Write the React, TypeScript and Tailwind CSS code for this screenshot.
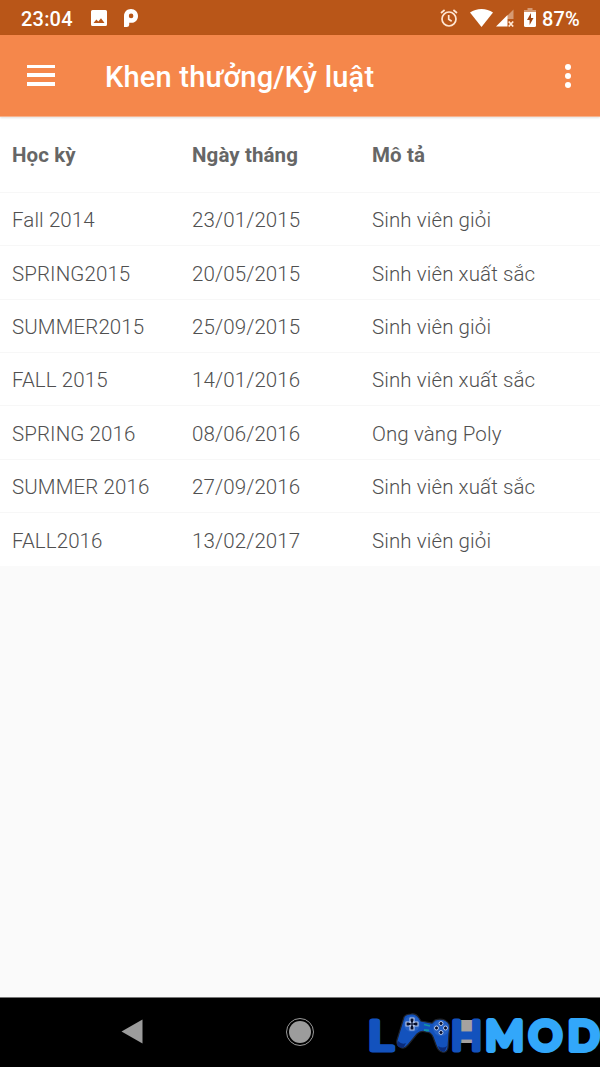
const records = [
  { term: 'Fall 2014', date: '23/01/2015', note: 'Sinh viên giỏi' },
  { term: 'SPRING2015', date: '20/05/2015', note: 'Sinh viên xuất sắc' },
  { term: 'SUMMER2015', date: '25/09/2015', note: 'Sinh viên giỏi' },
  { term: 'FALL 2015', date: '14/01/2016', note: 'Sinh viên xuất sắc' },
  { term: 'SPRING 2016', date: '08/06/2016', note: 'Ong vàng Poly' },
  { term: 'SUMMER 2016', date: '27/09/2016', note: 'Sinh viên xuất sắc' },
  { term: 'FALL2016', date: '13/02/2017', note: 'Sinh viên giỏi' },
];

function StatusBar() {
  return (
    <div className="flex h-[35px] items-center bg-[#b95618] pl-[21px] pr-[20px] pt-[2px] text-[20px] font-medium text-white">
      <span className="w-[70px] tracking-[0.2px]">23:04</span>
      {/* picture */}
      <svg className="-mt-[1px] h-[16px] w-[16px]" viewBox="0 0 16 16">
        <path
          fill="#fff"
          fillRule="evenodd"
          d="M1.500 0h13A1.500 1.500 0 0 1 16 1.500v13a1.500 1.500 0 0 1-1.500 1.500h-13A1.500 1.500 0 0 1 0 14.500v-13A1.500 1.500 0 0 1 1.500 0zM2.500 13h11L10 8.200l-2.700 3.400-1.900-2.200z"
        />
      </svg>
      <svg className="-mt-[1px] ml-[17px] h-[18px] w-[14px]" viewBox="0 0 14 18">
        <path
          fill="#fff"
          fillRule="evenodd"
          d="M0 7C0 2.800 3 0 7 0s7 2.900 7 6.900-2.900 6.900-6.800 6.900H5.200V16Q5 18 2.800 18H0zM4.800 6.900a2.300 2.300 0 1 0 4.600 0 2.300 2.300 0 1 0-4.600 0z"
        />
      </svg>
      <div className="ml-auto flex items-center">
        {/* alarm */}
        <svg className="mr-[12px] -mt-[2px] h-[18px] w-[18px]" viewBox="0 0 18 18" fill="none" stroke="#ffe6d2" strokeWidth="1.700">
          <circle cx="9" cy="10" r="7" />
          <path d="M8.700 6v4.300l3 1.900M1 4l3.600-3M17 4l-3.600-3" />
        </svg>
        <svg className="mr-[3px] -mt-[2px] h-[18px] w-[23px]" viewBox="0 0 23 18">
          <path fill="#fff" d="M0 3.600Q5 0 11.500 0T23 3.600L11.500 18z" />
        </svg>
        <svg className="mr-[10px] -mt-[2px] h-[18px] w-[18px]" viewBox="0 0 18 18">
          <path fill="#d69a73" d="M11 7l6.500-6.500V10H11z" />
          <path fill="#fff" d="M0 17.500L11.500 6v11.500z" />
          <path stroke="#ffe6d2" strokeWidth="1.700" d="M12.700 12.500l4.500 5M17.200 12.500l-4.500 5" />
        </svg>
        {/* battery */}
        <svg className="mr-[6px] -mt-[2px] h-[19px] w-[12px]" viewBox="0 0 12 19">
          <path fill="#d69a73" d="M3.500 0h5v2H12v3H0V2h3.500z" />
          <path fill="#fff" d="M0 4h12v13.500q0 1.500-1.500 1.500h-9Q0 19 0 17.500z" />
          <path fill="#a04412" d="M7 5L3 12h2.600v5L9.500 10H7z" />
        </svg>
        <span className="tracking-[0.2px]">87%</span>
      </div>
    </div>
  );
}

function Toolbar() {
  return (
    <header className="relative flex h-[82px] items-center border-b border-[#f7b28c] bg-[#f5874b] pl-[27px] pr-[29px] text-white shadow-[0_1px_2px_rgba(0,0,0,0.12)]">
      <button className="flex w-[28px] flex-col gap-[5px]">
        <span className="h-[3px] w-full bg-white" />
        <span className="h-[4px] w-full bg-white" />
        <span className="h-[4px] w-full bg-white" />
      </button>
      <h1 className="ml-[50px] mt-[5px] text-[29px] font-medium tracking-[0.2px]">Khen thưởng/Kỷ luật</h1>
      <button className="ml-auto flex flex-col gap-[3px]">
        <span className="size-[6px] rounded-full bg-white" />
        <span className="size-[6px] rounded-full bg-white" />
        <span className="size-[6px] rounded-full bg-white" />
      </button>
    </header>
  );
}

function Gamepad() {
  return (
    <svg className="absolute left-[27px] top-[-5px] h-[41px] w-[55px]" viewBox="0 0 55 41">
      <path
        fill="#1352bd"
        stroke="#20242c"
        strokeWidth="1.200"
        d="M8 5Q10 2 15 2Q20 1 23 6L25 9L36 11L39 8Q48 5 53 12Q54 15 53 22L52 36Q51 41 46 40Q42 39 40 33L37 25Q35 20 30 20Q25 18 21 22L12 33Q8 38 4 35Q0 33 1 28Z"
      />
      <path fill="#0b2c7c" d="M2 29q4 4 8 2l-2 4q-5 2-7-2zM42 34q5 3 9 0l-2 5q-5 2-7-5z" />
      <circle cx="16" cy="12" r="8" fill="#2460c5" />
      <circle cx="45" cy="16" r="8" fill="#2460c5" />
      <path
        fill="#040d2c"
        stroke="#b7c9ed"
        strokeWidth="1.100"
        strokeLinejoin="round"
        d="M14 6h4v3l-1 2 2-1h3v4h-3l-2-1 1 2v3h-4v-3l1-2-2 1h-3v-4h3l2 1-1-2z"
      />
      <g fill="#040d2c" stroke="#b7c9ed" strokeWidth="1">
        <circle cx="45" cy="11.500" r="2" />
        <circle cx="45" cy="20.500" r="2" />
        <circle cx="40.500" cy="16" r="2" />
        <circle cx="49.500" cy="16" r="2" />
      </g>
      <path stroke="#1495a5" strokeWidth="1.800" d="M28 12.500l6 1.500M28 18l5 .5" />
    </svg>
  );
}

function Watermark() {
  return (
    <div className="absolute left-[369px] top-[19px] h-[40px] w-[231px]">
      <svg
        className="h-[40px] w-[231px] overflow-visible"
        viewBox="0 0 231 40"
        fontFamily="Lato, sans-serif"
        fontWeight="400"
        strokeLinejoin="round"
        strokeLinecap="round"
      >
        <g fill="#1352bd" stroke="#1352bd" strokeWidth="5">
          <text x="-1" y="33" fontSize="40" textLength="25" lengthAdjust="spacingAndGlyphs">L</text>
          <text x="82" y="33" fontSize="41" textLength="31" lengthAdjust="spacingAndGlyphs">H</text>
        </g>
        <text x="116.500 160 199" y="33" fontSize="41" fill="#32a7fa" stroke="#32a7fa" strokeWidth="6">
          MOD
        </text>
      </svg>
      <Gamepad />
    </div>
  );
}

function NavigationBar() {
  return (
    <nav className="relative mt-auto flex h-[70px] items-center border-t border-[#777] bg-black">
      <svg className="-mt-[2px] ml-[121px] h-[25px] w-[22px]" viewBox="0 0 22 25">
        <path fill="#9c9c9c" d="M21.500.5v24L.5 12.500z" />
      </svg>
      <div className="-mt-[2px] ml-[143px] size-[28px] rounded-full border-[1.500px] border-[#999] p-[2px]">
        <div className="size-full rounded-full bg-[#9c9c9c]" />
      </div>
      <div className="-mt-[3px] ml-[141px] h-[23px] w-[20px] rounded-xs bg-[#a5a29f]" />
      <Watermark />
    </nav>
  );
}

export default function App() {
  return (
    <div className="flex h-[1067px] w-[600px] flex-col overflow-hidden bg-[#fafafa] font-[Roboto,sans-serif]">
      <StatusBar />
      <Toolbar />
      <main className="text-[20.500px] text-[#666]">
        <div className="grid h-[76px] grid-cols-[180px_180px_1fr] items-center border-b border-[#f7f7f7] bg-white pl-3 pt-[2px] font-bold tracking-[0.1px]">
          <span>Học kỳ</span>
          <span>Ngày tháng</span>
          <span>Mô tả</span>
        </div>
        {records.map((record) => (
          <div
            key={record.date}
            className="grid h-[53.330px] grid-cols-[180px_180px_1fr] items-center border-b border-[#f7f7f7] bg-white pl-3 pt-[3px] font-light tracking-[0.1px] text-[#505050] last:border-b-0"
          >
            <span>{record.term}</span>
            <span>{record.date}</span>
            <span>{record.note}</span>
          </div>
        ))}
      </main>
      <NavigationBar />
    </div>
  );
}
